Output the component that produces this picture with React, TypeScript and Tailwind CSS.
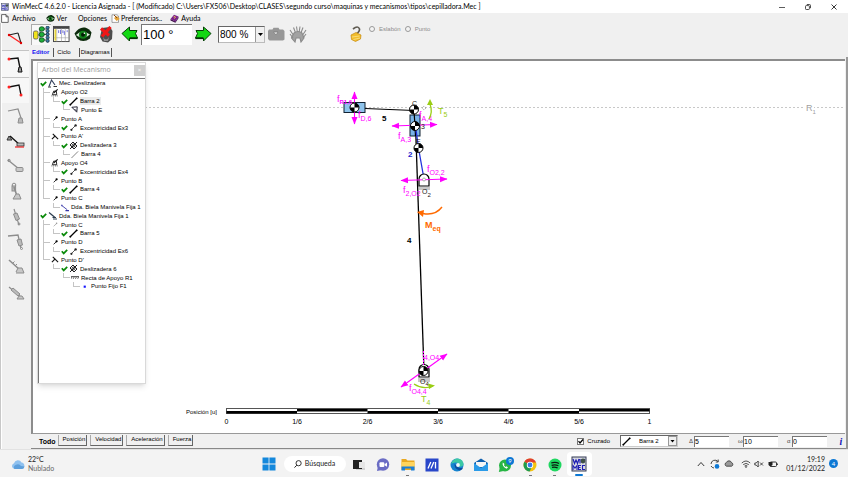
import type { ReactNode } from "react";

const UI = "font-['Liberation_Sans',sans-serif]";

/* ---------- shared glyphs ---------- */

function Check() {
  return (
    <svg viewBox="0 0 7 7" className="h-[7px] w-[7px] shrink-0">
      <path d="M0.8 3.2 L2.7 5.4 L6.2 1.8" fill="none" stroke="#0a8a0a" strokeWidth="1.7" />
    </svg>
  );
}

function AppLogo({ className }: { className: string }) {
  return (
    <svg viewBox="0 0 16 16" className={className}>
      <rect x="1" y="1" width="14" height="14" fill="#d9dae2" stroke="#333a55" strokeWidth="1" />
      <path d="M2 3 L3.5 7.5 L5 4 L6.5 7.5 L8 3 M9 3 V7.5 M11 7 L14 3" fill="none" stroke="#1f1fb4" strokeWidth="1.2" />
      <path d="M2 14 V9.5 L4 12 L6 9.5 V14 M10 9.5 H7.5 V13.5 H10 M7.5 11.5 H9.5 M14 9.5 H11.5 V13.5 H14" fill="none" stroke="#1f1fb4" strokeWidth="1.1" />
      <circle cx="12" cy="5" r="2.4" fill="#3f5145" />
    </svg>
  );
}

function EyeIcon({ className }: { className: string }) {
  return (
    <svg viewBox="0 0 18 16" className={className}>
      <path d="M0.5 7 Q5 0 11 1 Q15 2 17.5 6 L16 12 Q9 17 3 12 Z" fill="#0c2a0c" />
      <path d="M2 8.5 Q8 2.5 16 8 Q9 14.5 2 8.5" fill="#d9ecd9" />
      <circle cx="9" cy="8.2" r="4" fill="#12801a" />
      <circle cx="9" cy="8.2" r="2" fill="#021a04" />
      <circle cx="10.4" cy="6.8" r="0.8" fill="#fff" />
    </svg>
  );
}

function ArrowIcon({ flip }: { flip?: boolean }) {
  return (
    <svg viewBox="0 0 18 16" className={flip ? "h-4 w-[18px] -scale-x-100" : "h-4 w-[18px]"}>
      <path d="M1 7.5 L8.5 1 V4.5 H16 L14.5 7.5 L16.5 12 H8.5 V15 Z" fill="#12d812" stroke="#073d07" strokeWidth="1" />
      <path d="M9 12.3 H16.6" stroke="#053005" strokeWidth="1.6" />
    </svg>
  );
}

/* ---------- title bar and menu ---------- */

function TitleBar() {
  return (
    <header className="flex h-[13px] shrink-0 items-center bg-white pl-px font-['Lato',sans-serif] text-[7px] text-black">
      <AppLogo className="mr-[3px] h-2 w-2" />
      <h1 className="flex-1 whitespace-pre leading-[13px]">
        WinMecC 4.6.2.0 - Licencia Asignada - [ (Modificado) C:\Users\FX506\Desktop\CLASES\segundo curso\maquinas y mecanismos\tipos\cepilladora.Mec ]
      </h1>
      <div className="flex gap-5 pr-[11px]">
        <button aria-label="Minimizar" className="h-[6px] w-[6px]">
          <svg viewBox="0 0 6 6"><path d="M0 3.5 H6" stroke="#333" strokeWidth="0.8" /></svg>
        </button>
        <button aria-label="Restaurar" className="h-[6px] w-[6px]">
          <svg viewBox="0 0 6 6" fill="none" stroke="#222" strokeWidth="0.8"><rect x="0.5" y="1.6" width="3.9" height="3.9" rx="0.8" /><path d="M1.8 0.5 H4.6 Q5.5 0.5 5.5 1.5 V4.2" /></svg>
        </button>
        <button aria-label="Cerrar" className="h-[6px] w-[6px]">
          <svg viewBox="0 0 6 6"><path d="M0.5 0.5 L5.5 5.5 M5.5 0.5 L0.5 5.5" stroke="#222" strokeWidth="0.9" /></svg>
        </button>
      </div>
    </header>
  );
}

function MenuBar() {
  return (
    <nav className="flex h-[10px] shrink-0 items-center whitespace-nowrap bg-[#f0f0f0] pl-px font-['Lato',sans-serif] text-[7px] leading-[10px] text-black">
      <button className="mr-[10px] flex items-center gap-[3px]">
        <svg viewBox="0 0 8 9" className="h-[9px] w-2"><path d="M0.6 0.6 H5 L7.2 2.8 V8.4 H0.6 Z M5 0.6 V2.8 H7.2" fill="#fff" stroke="#444" strokeWidth="0.8" /></svg>
        Archivo
      </button>
      <button className="mr-[11px] flex items-center gap-[2px]">
        <EyeIcon className="h-[9px] w-[9px]" />
        Ver
      </button>
      <button className="mr-1">Opciones</button>
      <button className="mr-2 flex items-center gap-px">
        <svg viewBox="0 0 9 9" className="h-[9px] w-[9px]"><path d="M1 0.8 H6 L7.5 2 V8.4 H1 Z" fill="#fff" stroke="#666" strokeWidth="0.6" /><path d="M3 4 L6 2 L8.8 5 L5.5 7 Z" fill="#e3a43a" /><path d="M3 1 L6 4" stroke="#8a4a16" strokeWidth="1" /></svg>
        Preferencias..
      </button>
      <button className="flex items-center gap-[2px]">
        <svg viewBox="0 0 9 9" className="h-[9px] w-[9px]"><path d="M0.5 5 L4 0.8 L8.5 2.5 L5.4 7.5 Z" fill="#7a1f8c" /><path d="M0.5 5 V6.6 L5.4 8.8 L8.5 4.2 V2.5 L5.4 7.5 Z" fill="#3f0c4c" /><path d="M3.6 3 Q5.5 2 5.4 3.4 L4.4 4.6" fill="none" stroke="#f7d94a" strokeWidth="0.9" /></svg>
        Ayuda
      </button>
    </nav>
  );
}

/* ---------- left tool strip ---------- */

const GREY = "#8d8d8d";

const tools: { name: string; box?: boolean; art: ReactNode }[] = [
  { name: "Eslabón ternario", art: <><path d="M3 7 L12 5" stroke="#222" strokeWidth="1.1" /><path d="M12 5 L15 15" stroke="#222" strokeWidth="1.1" /><path d="M3 7 L15 15" stroke="#f22" strokeWidth="1.4" /><circle cx="3" cy="7" r="1.2" fill="#d00" /><circle cx="15" cy="15" r="1.2" fill="#d00" /></> },
  { name: "Manivela", box: true, art: <><path d="M3 4 L12 3 L14 13" stroke="#111" strokeWidth="1.4" /><circle cx="3" cy="4" r="1.5" fill="#f22" /><path d="M12 17 L13 12 H15 L16 17 Z" stroke="#111" strokeWidth="1" fill="#999" /></> },
  { name: "Díada RRR", box: true, art: <><path d="M3 6 L13 4 L15 14" stroke="#111" strokeWidth="1.3" /><circle cx="3" cy="6" r="1.5" fill="#f22" /><circle cx="15" cy="14" r="1.5" fill="#f22" /></> },
  { name: "Biela apoyada", art: <g stroke={GREY}><path d="M2 5 L12 3 L15 12" strokeWidth="1.2" /><path d="M12 17 L13 12 H16 L17 17 Z" fill="#bbb" /></g> },
  { name: "Biela manivela", art: <><path d="M1 8 L3 4 L6 8 Z" stroke="#333" fill="#999" /><path d="M4 4 L14 13" stroke="#111" strokeWidth="1.3" /><rect x="11" y="11" width="7" height="3" stroke="#333" strokeWidth="0.8" fill="#bbb" /><path d="M9 15 H18" stroke="#e22" strokeWidth="1.2" /></> },
  { name: "Corredera", art: <g stroke={GREY}><path d="M2 3 L13 12" strokeWidth="1.4" /><circle cx="3" cy="3.5" r="1.2" /><rect x="10" y="10.5" width="7" height="4" rx="1" fill="#c8c8c8" /></g> },
  { name: "Deslizadera", art: <g stroke={GREY}><circle cx="8" cy="3" r="1.8" /><rect x="6" y="4" width="3.6" height="5" fill="#bbb" /><path d="M8 5 L11 14" strokeWidth="1.6" /><path d="M7 17 H15 L13 12 H10 Z" fill="#c8c8c8" /></g> },
  { name: "Biela deslizante", art: <g stroke={GREY}><path d="M8 1 L13 17" strokeWidth="1.2" /><path d="M7.5 6 L11 5 L13.5 11 L10 12.5 Z" fill="#bbb" /><circle cx="13" cy="16" r="1" /></g> },
  { name: "Díada deslizante", art: <g stroke={GREY}><path d="M2 3 L12 2 L15 15" strokeWidth="1.3" /><path d="M11 7 L15 6 L16.500 12 L13 13 Z" fill="#bbb" /><circle cx="15.5" cy="15.5" r="1" /></g> },
  { name: "Actuador", art: <g stroke={GREY}><path d="M3 2 L14 12" strokeWidth="1.6" /><path d="M7 5 L8.5 3.5 M9 8 L11 6" /><path d="M10 14 L12 10 H16 L18 15 H10" fill="#c8c8c8" /></g> },
  { name: "Cilindro", art: <g stroke={GREY}><path d="M3 3 L16 14" strokeWidth="1.2" /><path d="M5 6 L7 4 L14 10 L12 12 Z" fill="#bbb" /><path d="M11 15 H18 L16 12 H13 Z" fill="#c8c8c8" /></g> },
];

function ToolStrip() {
  return (
    <aside className="w-7 shrink-0 border-l border-white pt-[2px]">
      <div className="flex h-[281px] flex-col">
        {tools.map((t) => (
          <button
            key={t.name}
            aria-label={t.name}
            className={
              t.box
                ? "flex min-h-0 flex-1 items-center justify-center border-t border-[#c4c4c4] bg-[#f7f7f7]"
                : "flex min-h-0 flex-1 items-center justify-center"
            }
          >
            <svg viewBox="0 0 20 19" className="h-[19px] w-5" fill="none">{t.art}</svg>
          </button>
        ))}
      </div>
    </aside>
  );
}

/* ---------- top toolbar ---------- */

function Toolbar() {
  return (
    <div className={`${UI} flex h-[22px] shrink-0 items-center text-black`}>
      <button aria-label="Árbol" className="flex h-[21px] w-5 items-center justify-center border-l border-t border-[#aaa] bg-[#f8f8f8]">
        <svg viewBox="0 0 17 17" className="h-[17px] w-[17px]">
          <rect x="0.5" y="5" width="4.5" height="8" rx="1.5" fill="#f0e21c" stroke="#555" strokeWidth="0.8" />
          <path d="M5 9 H7 M7 3 V14 M11 3 H13 M11 8.5 H13 M11 14 H13" stroke="#333" strokeWidth="0.8" />
          {[3, 8.5, 14].map((y) => <ellipse key={y} cx="8.8" cy={y} rx="2.6" ry="2.3" fill="#1fae3a" stroke="#063f12" strokeWidth="0.7" />)}
          {[1.6, 4.9, 8.2, 11.5, 14.8].map((y) => <circle key={y} cx="14.6" cy={y} r="1.6" fill="#3b7aa8" stroke="#0b2433" strokeWidth="0.7" />)}
        </svg>
      </button>
      <button aria-label="Tabla" className="ml-[2px]">
        <svg viewBox="0 0 18 18" className="h-[18px] w-[17px]">
          <rect x="0.5" y="1" width="16.5" height="16" fill="#fff" stroke="#444" strokeWidth="1" />
          <path d="M1 2.5 H17" stroke="#444" strokeWidth="2" />
          <path d="M4 3 V17 M9 3 V17 M13 3 V17 M1 13 H17" stroke="#999" strokeWidth="0.6" />
          <path d="M2.5 4 V16" stroke="#e5d23a" strokeWidth="1.8" />
          <path d="M6 5 V8 M8 4.5 V9 M10.5 5 V8 M12 6 V10 M15 5 V7" stroke="#5a5ad8" strokeWidth="0.9" />
        </svg>
      </button>
      <button aria-label="Ver" className="ml-1"><EyeIcon className="h-[17px] w-[18px]" /></button>
      <button aria-label="Parar" className="ml-[7px]">
        <svg viewBox="0 0 14 17" className="h-[17px] w-[14px]">
          <path d="M3 2 L11 1 L13.5 5 L13 13 L9 16.5 L3.5 15.5 L1 11 Z" fill="#4c4c4c" />
          <path d="M4 11 Q7 16 10 11 L9 15 H5 Z" fill="#8f8f8f" />
          <path d="M2 2.5 L10 9.5 M11.5 1 L3 10.5" stroke="#ee1616" strokeWidth="3.2" />
        </svg>
      </button>
      <button aria-label="Girar atrás" className="ml-2"><ArrowIcon /></button>
      <input aria-label="Ángulo" defaultValue="100 °" className="ml-[2px] h-[21px] w-[51px] border-l border-t border-[#777] bg-white pl-px text-[13px] leading-[20px] outline-none" />
      <button aria-label="Girar adelante" className="ml-[2px]"><ArrowIcon flip /></button>
      <span className="relative ml-[6px] flex h-[17px] w-[47px] items-center border border-b-[#bbb] border-l-[#666] border-r-[#bbb] border-t-[#666] bg-white">
        <select aria-label="Escala" className="h-[15px] w-full appearance-none bg-transparent pl-px text-[10px] leading-[15px] outline-none">
          <option>800 %</option>
        </select>
        <span className="pointer-events-none absolute inset-y-0 right-0 flex w-[9px] items-center justify-center border-l border-[#999] bg-[#f0f0f0]">
          <svg viewBox="0 0 5 3" className="h-[3px] w-[5px]"><path d="M0 0 H5 L2.5 3 Z" fill="#000" /></svg>
        </span>
      </span>
      <button aria-label="Capturar" className="ml-[2px]" disabled>
        <svg viewBox="0 0 18 14" className="h-[14px] w-[18px]"><path d="M1 4 L2 2.5 H5.5 L6.5 0.8 H11.5 L12.5 2.5 H16 L17.5 4 V12.5 L16 13.5 H2.5 L1 12 Z" fill="#979797" /><path d="M6.5 5 H11 L9 8 Z" fill="#ededed" stroke="#777" strokeWidth="0.7" /></svg>
      </button>
      <button aria-label="Vibrar" className="ml-1" disabled>
        <svg viewBox="0 0 18 17" className="h-[17px] w-[18px]" fill="none" stroke="#8b8b8b" strokeWidth="1.1">
          <path d="M7 8 L4.5 1.5 M8.5 7 L7.5 0.5 M10 7 L11 0.5 M11.5 8 L14 1.5 M5 10 L1 4 M13 10 L17 4" />
          <path d="M5 7 Q9 4 13 7 L15 12 L12 16 L11 12 H7 L6 16 L2.5 12 Z" fill="#a2a2a2" />
          <path d="M1 8 L4 12 M17 8 L14 12" />
        </svg>
      </button>
      <button aria-label="Bloqueo" className="ml-[43px]">
        <svg viewBox="0 0 12 16" className="h-4 w-3">
          <path d="M3 3 Q8 -1 9.5 3 Q10 5 6.5 8" fill="none" stroke="#5f5b52" strokeWidth="1.7" />
          <path d="M1 9 L6 6.5 L11 9 L10.5 13 L5.5 15.5 L1.5 13.5 Z" fill="#f2bd2c" stroke="#c58a10" strokeWidth="0.7" />
          <path d="M2 11 L9.5 10 M3.5 13.5 L10 12" stroke="#fbe48d" strokeWidth="0.8" />
        </svg>
      </button>
      <div className="mb-[10px] ml-[7px] flex gap-1 text-[6px] leading-[10px] text-[#8c8c8c]">
        <label className="flex items-center gap-1">
          <input type="radio" name="sel" disabled className="h-[6px] w-[6px] appearance-none rounded-full border border-[#999] bg-[#f4f4f4]" />
          Eslabón
        </label>
        <label className="flex items-center gap-1">
          <input type="radio" name="sel" disabled className="h-[6px] w-[6px] appearance-none rounded-full border border-[#999] bg-[#f4f4f4]" />
          Punto
        </label>
      </div>
    </div>
  );
}

function ViewTabs() {
  return (
    <div className={`${UI} flex h-[14px] shrink-0 items-center text-[6px] leading-[9px] text-black`}>
      <button className="pl-px pr-1 font-bold text-[#1010f0]">Editor</button>
      <button className="border-l border-[#555] pl-[3px] pr-[8px]">Ciclo</button>
      <button className="border-l border-r border-[#555] px-px">Diagramas</button>
    </div>
  );
}

/* ---------- mechanism tree ---------- */

type IconKind = "mec" | "apoyo" | "barra" | "thin" | "tri" | "punto" | "faint" | "exc" | "prima" | "desl" | "dda" | "ddaDark" | "recta" | "dot";

type Row = { text: string; depth: 0 | 1 | 2 | 3 | 4; icon: IconKind; check?: boolean; last?: boolean; rail?: boolean; selected?: boolean };

const rows: Row[] = [
  { text: "Mec. Deslizadera", depth: 0, icon: "mec", check: true },
  { text: "Apoyo O2", depth: 1, icon: "apoyo" },
  { text: "Barra 2", depth: 2, icon: "barra", check: true, rail: true, selected: true },
  { text: "Punto E", depth: 3, icon: "tri", rail: true },
  { text: "Punto A", depth: 1, icon: "punto" },
  { text: "Excentricidad Ex3", depth: 2, icon: "exc", check: true, rail: true },
  { text: "Punto A'", depth: 1, icon: "prima" },
  { text: "Deslizadera 3", depth: 2, icon: "desl", check: true, rail: true },
  { text: "Barra 4", depth: 3, icon: "thin", rail: true },
  { text: "Apoyo O4", depth: 1, icon: "apoyo" },
  { text: "Excentricidad Ex4", depth: 2, icon: "exc", check: true, rail: true },
  { text: "Punto B", depth: 1, icon: "punto" },
  { text: "Barra 4", depth: 2, icon: "barra", check: true, rail: true },
  { text: "Punto C", depth: 1, icon: "punto", last: true },
  { text: "Dda. Biela Manivela Fija 1", depth: 2, icon: "dda" },
  { text: "Dda. Biela Manivela Fija 1", depth: 0, icon: "ddaDark", check: true },
  { text: "Punto C", depth: 1, icon: "faint" },
  { text: "Barra 5", depth: 2, icon: "barra", check: true, rail: true },
  { text: "Punto D", depth: 1, icon: "punto" },
  { text: "Excentricidad Ex6", depth: 2, icon: "exc", check: true, rail: true },
  { text: "Punto D'", depth: 1, icon: "prima", last: true },
  { text: "Deslizadera 6", depth: 2, icon: "desl", check: true },
  { text: "Recta de Apoyo R1", depth: 3, icon: "recta" },
  { text: "Punto Fijo F1", depth: 4, icon: "dot" },
];

const treeArt: Record<IconKind, ReactNode> = {
  mec: <><path d="M1 7.5 L3.5 1 L7 6" stroke="#33415c" strokeWidth="1.1" /><path d="M0 8 H3 M5.5 7.5 H9" stroke="#333" strokeWidth="1" /></>,
  apoyo: <><path d="M1.5 7 L3 3 H6 L6.5 7 Z" stroke="#111" /><path d="M3 5 L7.5 1" stroke="#111" strokeWidth="1.3" /><path d="M0.5 8.3 H8" stroke="#333" strokeDasharray="1 1" /></>,
  barra: <><path d="M1 8 L8 1" stroke="#000" strokeWidth="1.3" /><circle cx="1.3" cy="7.7" r="0.9" fill="#000" /><circle cx="7.7" cy="1.3" r="0.9" fill="#000" /></>,
  thin: <path d="M0.5 8.5 L8 1" stroke="#555" strokeWidth="0.8" />,
  tri: <path d="M1 2 L7 1.5 L6.5 7.5 Z M4 4 L6 6" stroke="#223" strokeWidth="1.1" />,
  punto: <><path d="M3 6.5 L6.5 3.2" stroke="#111" strokeWidth="1" /><circle cx="6.3" cy="3.2" r="1.3" fill="#000" /></>,
  faint: <><path d="M3 6.5 L6.5 3.2" stroke="#999" strokeWidth="0.8" /><circle cx="6.3" cy="3.2" r="0.9" fill="#999" /></>,
  exc: <><path d="M2 7 L7 2" stroke="#333" strokeWidth="0.8" /><circle cx="2.4" cy="6.8" r="1.1" fill="#222" /><circle cx="6.6" cy="2.4" r="1.2" fill="#222" /></>,
  prima: <><path d="M1 7.5 L4.5 4 L8 7.5 M2 1.5 L5 4.5" stroke="#111" strokeWidth="1.2" /></>,
  desl: <><path d="M1 8 L8 1" stroke="#222" /><path d="M1 4 L4 1 L8 5 L5 8 Z" stroke="#222" /><circle cx="4.5" cy="4.5" r="1.4" stroke="#222" /></>,
  dda: <><path d="M0.5 2 L7 7" stroke="#3535a8" strokeWidth="1" /><path d="M5 8 H9 M1 1.5 V3" stroke="#3535a8" strokeWidth="1.2" /></>,
  ddaDark: <><path d="M1 1.5 L7 6.5" stroke="#2d3e50" strokeWidth="1.2" /><path d="M5 8 H9 M4.5 6.5 H8" stroke="#2d3e50" strokeWidth="1" /></>,
  recta: <><path d="M0 3.5 H9" stroke="#222" strokeWidth="0.9" /><path d="M1 4 L0 6 M3.5 4 L2.5 6 M6 4 L5 6 M8.5 4 L7.5 6" stroke="#222" strokeWidth="0.8" /></>,
  dot: <rect x="3" y="3.5" width="2.4" height="2.4" fill="#1414ff" />,
};

function Elbow({ open }: { open?: boolean }) {
  return (
    <span className="flex h-full w-2 shrink-0 flex-col pr-px">
      <span className="flex-1 border-b border-l border-[#c4c4c4]" />
      <span className={open ? "flex-1 border-l border-[#c4c4c4]" : "flex-1"} />
    </span>
  );
}

const railPad = ["", "", "w-[10px]", "w-5", "w-[30px]"];

function TreeRow({ row }: { row: Row }) {
  return (
    <li className={row.depth === 0 ? "flex min-h-0 flex-1 items-center pl-px" : "flex min-h-0 flex-1 items-center pl-1"}>
      {row.depth > 1 && <span className={`${railPad[row.depth]} h-full shrink-0 ${row.rail ? "border-l border-[#c4c4c4]" : ""}`} />}
      {row.depth > 0 && <Elbow open={row.depth === 1 && !row.last} />}
      {row.check && <Check />}
      <svg viewBox="0 0 9 9" fill="none" className={row.check ? "ml-px mr-[2px] h-[9px] w-[9px] shrink-0" : "mr-[2px] h-[9px] w-2 shrink-0"}>
        {treeArt[row.icon]}
      </svg>
      <span className={row.selected ? "bg-[#ebebeb] pr-px" : ""}>{row.text}</span>
    </li>
  );
}

function TreeWindow() {
  return (
    <section className={`${UI} absolute left-1 top-px h-[322px] w-[109px] whitespace-nowrap border border-[#d9d9d9] bg-white shadow-md`}>
      <div className="flex h-[15px] items-center justify-between pl-1 font-['Open_Sans',sans-serif] text-[7px] text-[#999]">
        <h2>Arbol del Mecanismo</h2>
        <button aria-label="Cerrar árbol" className="h-[11px] w-[11px] bg-[#cfcfcf] text-[6px] leading-[11px] text-white">×</button>
      </div>
      <div className="h-[305px] border-l border-t border-[#777]">
        <ul className="flex h-[212px] flex-col text-[6px] leading-[8px] text-black">
          {rows.map((r, i) => <TreeRow key={i} row={r} />)}
        </ul>
      </div>
    </section>
  );
}

/* ---------- drawing area ---------- */

function Joint({ x, y }: { x: number; y: number }) {
  return (
    <g transform={`translate(${x} ${y})`}>
      <circle r="4.5" fill="#fff" stroke="#000" strokeWidth="1" />
      <path d="M0 0 V-4.5 A4.5 4.5 0 0 1 4.5 0 Z M0 0 V4.5 A4.5 4.5 0 0 1 -4.5 0 Z" fill="#000" />
    </g>
  );
}

function Force({ x1, y1, x2, y2 }: { x1: number; y1: number; x2: number; y2: number }) {
  return <line x1={x1} y1={y1} x2={x2} y2={y2} stroke="#f0f" strokeWidth="1.1" markerStart="url(#force)" markerEnd="url(#force)" />;
}

function Sub({ x, y, a, b }: { x: number; y: number; a: string; b: string }) {
  return (
    <text x={x} y={y} fontSize="9">
      {a}
      <tspan dy="3" fontSize="7">{b}</tspan>
    </text>
  );
}

const scaleMarks = ["0", "1/6", "2/6", "3/6", "4/6", "5/6", "1"];

function Drawing() {
  return (
    <svg className="absolute inset-0 h-full w-full font-['Liberation_Sans',sans-serif]">
      <defs>
        <marker id="force" markerUnits="userSpaceOnUse" markerWidth="8" markerHeight="8" refX="7" refY="4" orient="auto-start-reverse">
          <path d="M0 1 L7.5 4 L0 7 Z" fill="#f0f" />
        </marker>
      </defs>
      <line x1="112" y1="46.500" x2="100%" y2="46.500" stroke="#c8c8c8" strokeWidth="1" strokeDasharray="2 2" />
      <g transform="translate(-33 -61)">
        <rect x="805" y="102" width="9" height="10" fill="#fff" />
        <text x="806" y="111" fontSize="9" fill="#a0a0a0">R<tspan dy="3" fontSize="6">1</tspan></text>

        {/* bars */}
        <path d="M365 108.5 L414 110.5" stroke="#000" strokeWidth="1.2" />
        <path d="M415.5 125 L424 371" stroke="#000" strokeWidth="1.3" />
        <rect x="344" y="102.500" width="21" height="10" fill="#8fc4ec" stroke="#123" />
        <rect x="410" y="115" width="10" height="21" fill="#7ab4e8" stroke="#123" />
        <path d="M414 110 L415.500 136" stroke="#000" strokeWidth="1.2" />
        <path d="M415.500 126 L418.500 148 L424 179" stroke="#2233dd" strokeWidth="1.3" fill="none" />
        <circle cx="424" cy="108" r="1.6" fill="none" stroke="#999" strokeDasharray="1 1" />

        {/* supports */}
        <path d="M419 186 V179 A5 5 0 0 1 429 179 V186 Z" fill="#fff" stroke="#000" strokeWidth="1.2" />
        <rect x="419" y="187" width="11" height="3" fill="#c9c9c9" />
        <path d="M419 377 V369.500 A5 5 0 0 1 429 369.500 V377 Z" fill="#fff" stroke="#000" strokeWidth="1.2" />
        <rect x="418" y="378" width="12" height="4" fill="#c9c9c9" />

        {/* forces */}
        <Force x1={354.5} y1={92} x2={354.5} y2={124} />
        <Force x1={392} y1={126} x2={437} y2={124.5} />
        <Force x1={401} y1={180.5} x2={447} y2={179} />
        <Force x1={401} y1={387} x2={447} y2={354} />
        <path d="M423.500 351 V366" stroke="#f0f" strokeDasharray="2 1" />

        <Joint x={354.5} y={107.5} />
        <Joint x={414} y={109.5} />
        <Joint x={415} y={126} />
        <Joint x={418.5} y={148} />
        <Joint x={423.5} y={371} />
        <circle cx="424" cy="179.500" r="1.500" fill="#fff" stroke="#999" strokeWidth="0.8" />

        <g fill="#f0f">
          <text x="337" y="102" fontSize="9">f<tspan dy="2" fontSize="6" fontWeight="bold">R1,6</tspan></text>
          <Sub x={358} y={118} a="f" b="D,6" />
          <Sub x={398} y={139} a="f" b="A,3" />
          <Sub x={419} y={118} a="f" b="A,4" />
          <Sub x={427} y={172} a="f" b="O2,2" />
          <Sub x={403} y={193} a="f" b="2,O2" />
          <text x="424" y="360" fontSize="7">4,O4</text>
          <Sub x={409} y={391} a="f" b="O4,4" />
        </g>
        <g fill="#222">
          <text x="412" y="106" fontSize="7">C</text>
          <text x="421" y="129" fontSize="7">3</text>
          <text x="416" y="144" fontSize="7">E</text>
          <text x="422" y="194" fontSize="7">O<tspan dy="3" fontSize="6">2</tspan></text>
          <text x="420" y="384" fontSize="7">O<tspan dy="2" fontSize="6">4</tspan></text>
        </g>
        <g fontSize="8" fontWeight="bold">
          <text x="382" y="121">5</text>
          <text x="408" y="157" fill="#22c">2</text>
          <text x="407" y="243">4</text>
        </g>

        {/* moments and torques */}
        <g fill="none" stroke="#9acd14" strokeWidth="1.3">
          <path d="M430 104 Q433 112 429 119" />
          <path d="M414 384 Q423 390 433 386" />
        </g>
        <path d="M427 105 L430 99 L433 105 Z M428 383.500 L435 385.500 L429 389 Z" fill="#9acd14" />
        <g fill="#9acd14">
          <Sub x={438} y={114} a="T" b="5" />
          <Sub x={421} y={402} a="T" b="4" />
        </g>
        <path d="M442 207 Q435 216 423 213.500" fill="none" stroke="#ff6a00" strokeWidth="1.4" />
        <path d="M417 212 L424 210 L423 217 Z" fill="#ff6a00" />
        <g fill="#ff6a00" fontWeight="bold"><Sub x={425} y={228} a="M" b="eq" /></g>

        {/* position scale */}
        <g fontSize="7" fill="#000">
          <text x="186" y="414" fontSize="6">Posición [u]</text>
          <rect x="226.500" y="408.500" width="423" height="5" fill="#fff" stroke="#555" />
          {scaleMarks.map((m, i) => (
            <g key={m}>
              {i < 6 && <rect x={226.5 + i * 70.5} y={i % 2 === 0 ? 411 : 409} width="70.500" height="2.500" fill="#000" />}
              <text x={226.5 + i * 70.5} y="424" textAnchor="middle">{m}</text>
            </g>
          ))}
        </g>
      </g>
    </svg>
  );
}

/* ---------- bottom bar of the editor ---------- */

function ParamField({ label, value, name }: { label: string; value: string; name: string }) {
  return (
    <label className="mr-[9px] flex items-center text-[#444]">
      <span className="w-[5px]">{label}</span>
      <input aria-label={name} defaultValue={value} className="h-[11px] w-[35px] border-l border-t border-[#777] bg-white text-[7px] leading-[9px] text-black outline-none" />
    </label>
  );
}

function BottomBar() {
  return (
    <div className={`${UI} flex h-[15px] shrink-0 items-center whitespace-nowrap border-b border-[#888] text-[6px] leading-[9px] text-black`}>
      <button className="h-full pl-2 pr-[2px] text-[7px] font-bold">Todo</button>
      <div className="mb-[2px] flex flex-1 gap-[3px]">
        {["Posición", "Velocidad", "Aceleración", "Fuerza"].map((t) => (
          <button key={t} className="h-[11px] border-b border-l border-r border-b-[#666] border-l-[#aaa] border-r-[#666] pl-1 pr-px">{t}</button>
        ))}
      </div>
      <label className="mr-[10px] flex items-center gap-[3px]">
        <span className="relative flex">
          <input type="checkbox" defaultChecked className="h-[7px] w-[7px] appearance-none border border-[#777] bg-white" />
          <svg viewBox="0 0 7 7" className="pointer-events-none absolute inset-0 h-[7px] w-[7px]"><path d="M1.500 3.200 L3 5 L6 1.500" fill="none" stroke="#000" strokeWidth="1.200" /></svg>
        </span>
        Cruzado
      </label>
      <span className="relative mr-[11px] flex h-3 w-[58px] items-center border border-b-[#ccc] border-l-[#666] border-r-[#ccc] border-t-[#666] bg-white">
        <svg viewBox="0 0 9 9" fill="none" className="ml-px h-[9px] w-[9px] shrink-0">{treeArt.barra}</svg>
        <select aria-label="Elemento" className="h-[10px] w-full appearance-none bg-transparent pl-2 leading-[10px] outline-none">
          <option>Barra 2</option>
        </select>
        <span className="pointer-events-none absolute inset-y-0 right-0 flex w-[9px] items-center justify-center border border-[#999] bg-[#f0f0f0]">
          <svg viewBox="0 0 5 3" className="h-[3px] w-[5px]"><path d="M0.500 0 H4.500 L2.500 2.500 Z" fill="#000" /></svg>
        </span>
      </span>
      <ParamField label="Δ" value="5" name="Incremento" />
      <ParamField label="ω" value="10" name="Velocidad angular" />
      <ParamField label="α" value="0" name="Aceleración angular" />
      <button aria-label="Información" className="w-[10px] font-['Liberation_Serif',serif] text-[10px] font-bold italic text-[#1515b8]">i</button>
    </div>
  );
}

/* ---------- Windows taskbar ---------- */

const apps: { name: string; run?: boolean; art: ReactNode }[] = [
  { name: "Vista de tareas", art: <><rect x="5" y="7" width="9" height="6" fill="#d2d2d2" /><rect x="2" y="3" width="9" height="9" fill="#222" /><rect x="8" y="5" width="6" height="6" fill="#e6e6e6" /></> },
  { name: "Chat", art: <><circle cx="8" cy="7.500" r="6.200" fill="#6a6cc4" /><path d="M2 14 L3 9 L7 13 Z" fill="#6a6cc4" /><rect x="4.500" y="5.200" width="4.800" height="4.800" rx="1" fill="#fff" /><path d="M9.500 7.200 L12 5.500 V9.700 L9.500 8.200 Z" fill="#fff" /></> },
  { name: "Explorador", run: true, art: <><path d="M1.500 2 H6 L7.500 3.500 H14.500 V13 H1.500 Z" fill="#e9a820" /><rect x="1.500" y="5" width="13" height="5" fill="#ffd45c" /><path d="M1.500 13.500 V9.500 H14.500 V13.500 H11 V11.500 H5 V13.500 Z" fill="#1c7fd6" /></> },
  { name: "MyASUS", art: <><rect x="1.500" y="1.500" width="13" height="13" fill="#2947c9" /><path d="M4 11.500 L6.800 5 M7 11.500 L9.800 5 M11.500 11.500 V5" stroke="#fff" strokeWidth="1.300" /></> },
  { name: "Edge", art: <><circle cx="8" cy="8" r="6.500" fill="#1683cf" /><path d="M2 7 Q4 1.500 9 1.600 Q14.500 2.500 14.500 8 Q13 10.500 9.500 9.500 Q10.500 5.500 6.500 5.500 Q3.500 5.500 2 7" fill="#3cc8a4" /><path d="M5.500 7 Q5 12 11 13.500 Q14 12.500 14 10.500 Q10 12 8.500 9.500 Z" fill="#0b4da0" /><circle cx="9" cy="8" r="1.900" fill="#f2f8fc" /></> },
  { name: "Correo", art: <><path d="M1 6 L8 1.500 L15 6 V14 H1 Z" fill="#0f5fae" /><path d="M3 5 H13 V10 H3 Z" fill="#f6f6f6" /><path d="M1 6 L8 11 L15 6 V14 H1 Z" fill="#2b9be8" /></> },
  { name: "WhatsApp", art: <><circle cx="7" cy="8.500" r="6" fill="#27b545" /><path d="M0.800 15 L2 10 L5.500 14 Z" fill="#27b545" /><path d="M4.800 5.500 Q3.800 9.500 8.500 11.800 L10 10.500 L8.500 9.300 L7.500 10 L5.900 8.200 L6.500 7 Z" fill="#fff" /><circle cx="12" cy="4" r="4" fill="#0d78d4" /><text x="12" y="6" fontSize="6" fill="#fff" textAnchor="middle">9</text></> },
  { name: "Chrome", run: true, art: <><circle cx="8" cy="8" r="6.500" fill="#f4c20d" /><path d="M8 8 L2.400 4.700 A6.500 6.500 0 0 1 14 5.500 H8 Z" fill="#df3e30" /><path d="M8 8 L2.400 4.700 A6.500 6.500 0 0 0 7.600 14.500 L10 9.500 Z" fill="#1e9a50" /><circle cx="8" cy="8" r="3.200" fill="#fff" /><circle cx="8" cy="8" r="2.400" fill="#3a7ce8" /></> },
  { name: "Spotify", run: true, art: <><circle cx="8" cy="8" r="6.500" fill="#1ed760" /><path d="M4.200 6 Q8.500 4.600 12 6.500 M4.600 8.300 Q8.300 7.200 11.400 8.800 M5 10.400 Q8 9.600 10.600 10.900" fill="none" stroke="#0b1a10" strokeWidth="1.200" /></> },
];

function Taskbar() {
  return (
    <footer className="flex h-[28px] shrink-0 items-center border-t border-[#e2e2e2] bg-[#f3f3f3] font-['Lato',sans-serif] text-[7px] leading-[9px] text-[#222]">
      <div className="flex flex-1 items-center gap-[3px] pl-[11px]">
        <svg viewBox="0 0 14 12" className="h-3 w-[14px]"><path d="M3.500 11 A3 3 0 0 1 3 5.200 A4 4 0 0 1 10.500 4.500 A3.300 3.300 0 0 1 10.800 11 Z" fill="#8fc1ef" /><path d="M3.500 11 A2.500 2.500 0 0 1 4.500 7 Q8 5 10 8 L13.500 8.500 Q13 11 10.800 11 Z" fill="#5d9fdc" /></svg>
        <div>
          <div>22°C</div>
          <div className="text-[#666]">Nublado</div>
        </div>
      </div>
      <nav className="flex items-center pl-1">
        <button aria-label="Inicio" className="mr-2">
          <svg viewBox="0 0 14 14" className="h-[14px] w-[14px]" fill="#1488dc"><path d="M0.500 0.500 H6.600 V6.600 H0.500 Z M7.400 0.500 H13.500 V6.600 H7.400 Z M0.500 7.400 H6.600 V13.500 H0.500 Z M7.400 7.400 H13.500 V13.500 H7.400 Z" /></svg>
        </button>
        <button className="mr-px flex h-4 w-[62px] items-center justify-center gap-[3px] rounded-full bg-white">
          <svg viewBox="0 0 8 8" className="h-2 w-2"><circle cx="4.600" cy="3.200" r="2.600" fill="none" stroke="#222" strokeWidth="0.900" /><path d="M2.800 5.200 L0.500 7.600" stroke="#222" strokeWidth="1" /></svg>
          Búsqueda
        </button>
        <div className="flex w-[245px]">
          {apps.map((a) => (
            <button key={a.name} aria-label={a.name} className="flex flex-1 flex-col items-center pt-[5px]">
              <svg viewBox="0 0 16 16" className="h-4 w-4">{a.art}</svg>
              <span className={a.run ? "mt-[2px] h-px w-[3px] bg-[#777]" : "mt-[2px] h-px w-[3px]"} />
            </button>
          ))}
          <button aria-label="WinMecC" className="flex flex-1 flex-col items-center rounded bg-white pt-[4px]">
            <AppLogo className="h-4 w-4" />
            <span className="mt-[2px] h-[2px] w-2 rounded bg-[#0d78d4]" />
          </button>
        </div>
      </nav>
      <div className="flex flex-1 items-center justify-end pr-[10px]">
        <svg viewBox="0 0 8 6" className="mr-[5px] h-[6px] w-2"><path d="M0.800 5 L4 1.500 L7.200 5" fill="none" stroke="#222" strokeWidth="0.900" /></svg>
        <svg viewBox="0 0 10 10" className="mr-1 h-[10px] w-[10px]"><path d="M1 5 A4 4 0 0 1 8 2.500 M8.200 0.500 V3 H5.800 M1 7 A4 4 0 0 0 4 9" fill="none" stroke="#333" strokeWidth="0.900" /><circle cx="7" cy="7.400" r="2.300" fill="#0d78d4" /></svg>
        <svg viewBox="0 0 10 7" className="mr-[7px] h-[7px] w-[10px]"><path d="M2.500 6.200 A2 2 0 0 1 2.500 2.400 A2.700 2.700 0 0 1 7.500 2.600 A1.900 1.900 0 0 1 7.600 6.200 Z" fill="#999" stroke="#333" strokeWidth="0.800" /></svg>
        <svg viewBox="0 0 10 8" className="mr-[3px] h-2 w-[10px]"><path d="M0.800 3 Q5 -1 9.200 3 M2.200 4.600 Q5 2.200 7.800 4.600 M3.600 6 Q5 5 6.400 6" fill="none" stroke="#444" strokeWidth="0.900" /><circle cx="5" cy="7" r="0.800" fill="#222" /></svg>
        <svg viewBox="0 0 10 8" className="mr-1 h-2 w-[10px]"><path d="M0.800 3 H2.200 L4.200 1 V7 L2.200 5 H0.800 Z M6 2.500 L9 5.500 M9 2.500 L6 5.500" fill="none" stroke="#222" strokeWidth="0.800" /></svg>
        <svg viewBox="0 0 10 8" className="mr-2 h-2 w-[10px]"><rect x="2" y="2" width="6.500" height="4.500" rx="1" fill="none" stroke="#222" strokeWidth="0.900" /><path d="M9.300 3.500 V5" stroke="#222" /><path d="M0.500 2 H4.500 V5 L2.500 6.500 L0.500 5 Z" fill="#222" /></svg>
        <div className="text-right">
          <div>19:19</div>
          <div>01/12/2022</div>
        </div>
        <span className="ml-1 flex h-[9px] w-[9px] items-center justify-center rounded-full bg-[#0d78d4] text-[6px] text-white">4</span>
      </div>
    </footer>
  );
}

export default function App() {
  return (
    <div className="flex h-screen flex-col overflow-hidden bg-[#f0f0f0]">
      <TitleBar />
      <MenuBar />
      <div className="flex min-h-0 flex-1 border-l border-[#c8c8c8]">
        <ToolStrip />
        <main className="flex min-w-0 flex-1 flex-col pl-[2px]">
          <Toolbar />
          <ViewTabs />
          <div className="relative mr-px min-h-0 flex-1 overflow-hidden border-b border-l-2 border-t-2 border-b-[#999] border-l-[#8c8c8c] border-t-[#8c8c8c] bg-white">
            <Drawing />
            <TreeWindow />
          </div>
          <BottomBar />
        </main>
        <div className="mt-[34px] w-[2px] shrink-0 bg-[#999]" />
      </div>
      <Taskbar />
    </div>
  );
}
